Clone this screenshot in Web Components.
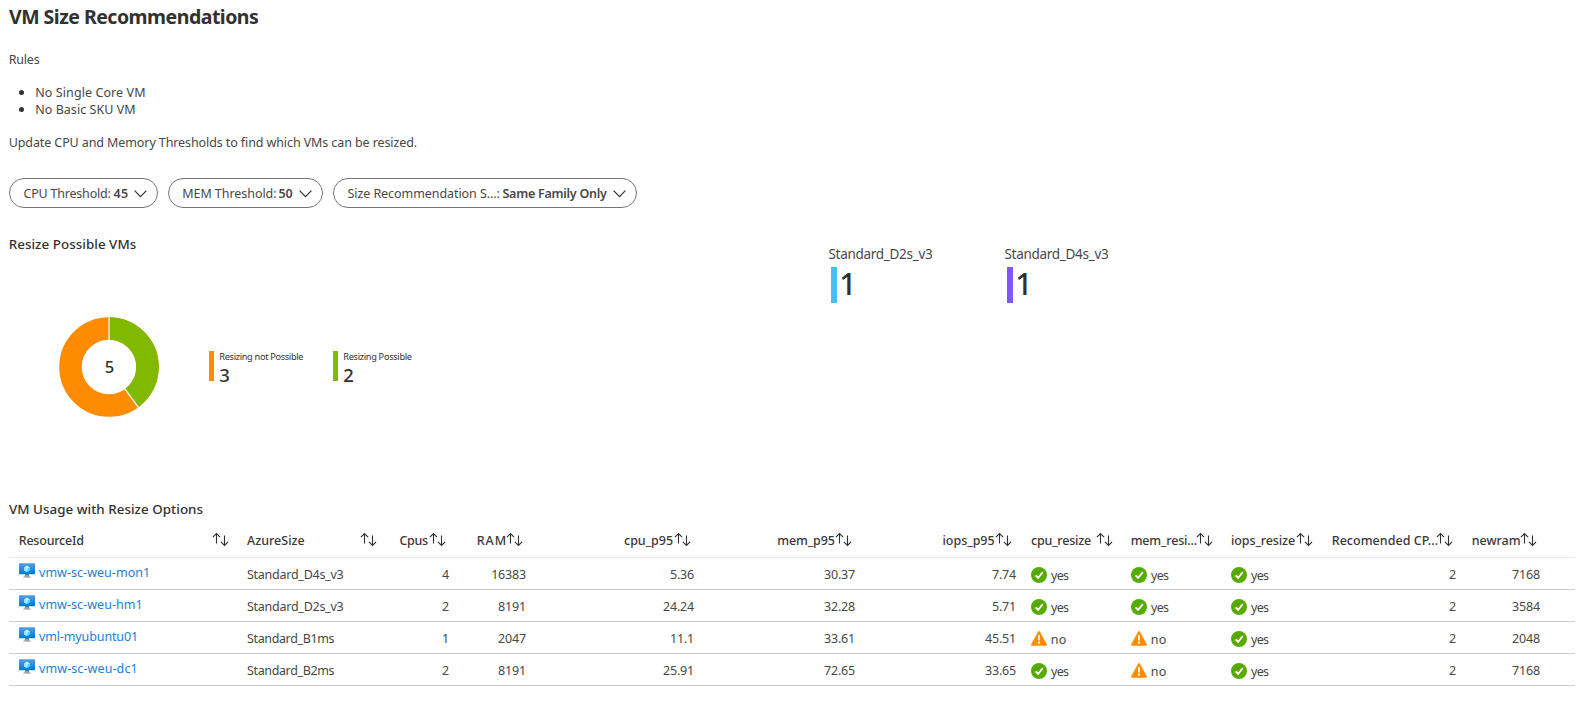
<!DOCTYPE html>
<html lang="en">
<head>
<meta charset="utf-8">
<title>VM Size Recommendations</title>
<style>
body{margin:0;background:#fff;color:#484746;font-family:"Noto Sans","Open Sans",sans-serif;font-size:12.5px;overflow:hidden}
</style>
</head>
<body>
<vm-workbook></vm-workbook>
<script>
const define=(name,css,html,ready)=>{
  const t=document.createElement('template');
  t.innerHTML=`<style>${css}</style>${html}`;
  customElements.define(name,class extends HTMLElement{
    connectedCallback(){
      if(this.shadowRoot)return;
      this.attachShadow({mode:'open'}).append(t.content.cloneNode(true));
      if(ready)ready.call(this,this.shadowRoot);
    }
  });
};

/* A single line of text tracked so that its ink spans the width in "w". */
const pen=document.createElement('canvas').getContext('2d');
define('fit-text',`:host{display:inline-block;flex:none;white-space:pre}`,`<slot></slot>`,function(){
  const w=+this.getAttribute('w'),cs=getComputedStyle(this),s=this.textContent;
  pen.font=`${cs.fontWeight} ${cs.fontSize} ${cs.fontFamily}`;
  const m=pen.measureText(s);
  const ink=m.actualBoundingBoxLeft+m.actualBoundingBoxRight;
  const lead=m.actualBoundingBoxLeft;
  this.style.width=w+'px';
  this.style.textIndent=(lead<-.8?lead+.7:lead)+'px';
  if(s.length>1)this.style.letterSpacing=((w-ink)/(s.length-1)).toFixed(3)+'px';
});

define('sort-icon',`:host{display:block;flex:none;width:17px;height:17px}svg{display:block}`,
`<svg width="17" height="17" viewBox="0 0 17 17" fill="none" stroke="#323130" stroke-width="1.1"><path d="M4.500 11.500V1.700M.9 5.100l3.600-3.600 3.600 3.600M12.500 3.500v9.800M8.900 9.800l3.600 3.600 3.600-3.600"/></svg>`);

define('vm-icon',`:host{display:block;flex:none;width:16px;height:15px}svg{display:block}`,
`<svg width="16" height="15" viewBox="0 0 16 15"><defs><linearGradient id="g" x1="0" y1="1" x2="0" y2="0"><stop offset="0" stop-color="#0078d4"/><stop offset="1" stop-color="#5a9bef"/></linearGradient><linearGradient id="s" x1="0" y1="0" x2="0" y2="1"><stop offset="0" stop-color="#777"/><stop offset="1" stop-color="#bbb"/></linearGradient></defs>
<path d="M6 11h4c0 2 .6 2.700 2 3v.7H4V14c1.400-.3 2-1 2-3z" fill="url(#s)"/><rect y=".2" width="16" height="11" rx=".5" fill="url(#g)"/>
<path d="M8 2.700l2.800 1.500v3.200L8 9 5.200 7.400V4.200z" fill="#50e6ff"/><path d="M8 2.700l2.800 1.500L8 5.800 5.200 4.200z" fill="#c3f1ff"/><path d="M8 5.800V9L5.200 7.400V4.200z" fill="#9cebff"/></svg>`);

define('status-icon',`:host{display:block;flex:none;width:16px;height:16px}svg{display:none}:host([kind=yes]) .y,:host([kind=no]) .n{display:block}`,
`<svg class="y" width="16" height="16" viewBox="0 0 16 16"><circle cx="8" cy="8" r="8" fill="#57ab00"/><path d="M4.600 8.300l2.500 2.500L11.800 5.200" fill="none" stroke="#fff" stroke-width="1.900"/></svg>
<svg class="n" width="16" height="16" viewBox="0 0 16 16"><path d="M7.200.6Q8-.5 8.800.6l7 12.700q.6 1.200-.7 1.400H.9q-1.300-.2-.7-1.400z" fill="#ff8c00"/><path d="M7 4.300h2l-.3 5.200H7.300z" fill="#fff"/><circle cx="8" cy="11.700" r="1.150" fill="#fff"/></svg>`);

define('filter-pill',`:host{display:flex;box-sizing:border-box;height:30px;border:1px solid #777;border-radius:15px;line-height:29px;padding-left:13.500px}
slot[name=value]{display:block;margin-left:3px;font-weight:600}svg{display:block;margin:11px 0 0 6px}`,
`<slot></slot><slot name="value"></slot><svg width="13" height="8" viewBox="0 0 13 8" fill="none" stroke="#323130" stroke-width="1.200"><path d="M.6.700l5.900 5.900L12.400.7"/></svg>`);

define('usage-donut',`:host{display:block;width:100px;height:100px}svg{display:block}text{font:500 16.500px "Noto Sans",sans-serif;fill:#323130}`,
`<svg width="100" height="100" viewBox="0 0 100 100"><g fill="none" stroke-width="22.500" transform="rotate(-90 50 50)"><circle cx="50" cy="50" r="38.500" stroke="#ff8c00"/><circle cx="50" cy="50" r="38.500" stroke="#7fba00" pathLength="100" stroke-dasharray="40 60"/></g><path d="M50 0v23M65.900 71.800L79.600 90.700" stroke="#fff" stroke-width="1.200"/><text x="50.500" y="56" text-anchor="middle">5</text></svg>`);

define('legend-item',`:host{display:flex;gap:5.300px;color:#323130}i{width:5px;height:30px;background:var(--tone)}div{display:flex;flex-direction:column}
slot{display:block;font-size:9.200px;line-height:12px;height:12px}slot[name=value]{font-size:18.500px;font-weight:500;line-height:20px;height:20px;margin-top:2px}`,
`<i></i><div><slot></slot><slot name="value"></slot></div>`);

define('count-tile',`:host{display:block;width:176px}slot{display:block;font-size:13.500px;line-height:18px;height:18px}
div{display:flex;gap:4px;margin:4px 0 0 2px}i{width:6px;height:36px;background:var(--tone)}slot[name=value]{font-size:30px;font-weight:500;line-height:33px;height:33px;color:#323130}`,
`<slot></slot><div><i></i><slot name="value"></slot></div>`);

/* name, name width, numeric column */
const columns=[['ResourceId',63.5],['AzureSize',57.5],['Cpus',28.5,1],['RAM',28,1],['cpu_p95',49,1],['mem_p95',56.5,1],['iops_p95',52,1],['cpu_resize',60],['mem_resi...',65],['iops_resize',64],['Recomended CP...',105,1],['newram',47,1]];
const machines=[
 [['vmw-sc-weu-mon1',109],['Standard_D4s_v3',96.5],'4','16383','5.36','30.37','7.74','yes','yes','yes','2','7168'],
 [['vmw-sc-weu-hm1',101.5],['Standard_D2s_v3',96.5],'2','8191','24.24','32.28','5.71','yes','yes','yes','2','3584'],
 [['vml-myubuntu01',97],['Standard_B1ms',87.5],'1','2047','11.1','33.61','45.51','no','no','yes','2','2048'],
 [['vmw-sc-weu-dc1',96.5],['Standard_B2ms',87.5],'2','8191','25.91','72.65','33.65','yes','no','yes','2','7168']];
define('vm-grid',`:host{display:block;width:1566px}
.r{display:grid;grid-template-columns:228px 148px 74px 77px 168px 161px 156px 100px 100px 100px 145px 84px;border-bottom:1px solid #ccc;height:31px;line-height:17px}
.r.h{height:39px;border-color:#eaeaea;font-weight:500;color:#3a3938}
.c{display:flex;padding:8px 0 0 10px;min-width:0}
.n{justify-content:flex-end;padding-right:10px;letter-spacing:-.18px}.n:nth-child(7){padding-right:5px}
.h .c{padding:14px 8.500px 0 10px;justify-content:space-between;letter-spacing:0}
.h .n{justify-content:flex-end;padding:14px 13.500px 0 0;gap:.5px}.h .n:nth-child(7){padding-right:9px}
.h .n:nth-child(11){gap:0}.h .n:nth-child(11) fit-text{margin-right:-1.500px}
.c.l{color:#1a80d9;gap:4px;padding-top:6px}.l vm-icon{margin-top:-1px}
.s{gap:4px;padding-top:9px}`,``,function(root){
  const row=(cls,cells)=>`<div class="r ${cls}">${cells}</div>`;
  const num=i=>columns[i][2]?'n':'';
  const cell=(v,i)=>{
    if(i===0)return `<div class="c l"><vm-icon></vm-icon><fit-text w="${v[1]}">${v[0]}</fit-text></div>`;
    if(i===1)return `<div class="c"><fit-text w="${v[1]}">${v[0]}</fit-text></div>`;
    if(v==='yes'||v==='no')return `<div class="c s"><status-icon kind="${v}"></status-icon><fit-text w="${v==='yes'?18:14}">${v}</fit-text></div>`;
    return `<div class="c ${num(i)}">${v}</div>`;
  };
  const box=document.createElement('div');
  box.innerHTML=row('h',columns.map((c,i)=>`<div class="c ${num(i)}"><fit-text w="${c[1]}">${c[0]}</fit-text><sort-icon></sort-icon></div>`).join(''))
   +machines.map(m=>row('',m.map(cell).join(''))).join('');
  root.append(box);
});

define('vm-workbook',`:host{display:block;box-sizing:border-box;height:706px;padding-left:9px;line-height:17px}
h1,h2,p,ul{margin:0;color:#484746}h1,h2{color:#323130}h1{font-size:19.500px;line-height:34px;height:32px;font-weight:700}
p,li{height:17px}p fit-text,li fit-text{display:block}.rules{margin-top:19px}
ul{padding:0;margin:16px 0;list-style:none}li{display:flex;align-items:center;gap:11.500px;padding-left:10px}li::before{content:"";width:5px;height:5px;border-radius:50%;background:#323130}
.f{display:flex;gap:10px;margin-top:27px}
h2{font-size:13.400px;line-height:18px;height:18px;font-weight:500}
.m{display:grid;grid-template-columns:819.500px 1fr;height:265px;margin-top:27px}
.d{display:flex;padding:64px 0 0 50px}.k{display:flex;margin:34px 0 0 50px}
.t{display:flex;padding-top:10px}`,
`<h1><fit-text w="249">VM Size Recommendations</fit-text></h1>
<p class="rules"><fit-text w="30">Rules</fit-text></p>
<ul><li><fit-text w="109">No Single Core VM</fit-text></li><li><fit-text w="99">No Basic SKU VM</fit-text></li></ul>
<p><fit-text w="407">Update CPU and Memory Thresholds to find which VMs can be resized.</fit-text></p>
<div class="f">
<filter-pill style="width:149px"><fit-text w="87">CPU Threshold:</fit-text><fit-text slot="value" w="14.500">45</fit-text></filter-pill>
<filter-pill style="width:155px"><fit-text w="93">MEM Threshold:</fit-text><fit-text slot="value" w="14">50</fit-text></filter-pill>
<filter-pill style="width:304px"><fit-text w="152">Size Recommendation S...:</fit-text><fit-text slot="value" w="104.500">Same Family Only</fit-text></filter-pill>
</div>
<div class="m"><section><h2><fit-text w="126">Resize Possible VMs</fit-text></h2>
<div class="d"><usage-donut></usage-donut><div class="k">
<legend-item style="--tone:#ff8c00;width:124px"><fit-text w="84">Resizing not Possible</fit-text><fit-text slot="value" w="9.500">3</fit-text></legend-item>
<legend-item style="--tone:#7fba00"><fit-text w="68.500">Resizing Possible</fit-text><fit-text slot="value" w="9.500">2</fit-text></legend-item></div></div></section>
<section class="t"><count-tile style="--tone:#47bdf5"><fit-text w="103.500">Standard_D2s_v3</fit-text><fit-text slot="value" w="10">1</fit-text></count-tile>
<count-tile style="--tone:#7e58ff"><fit-text w="103.500">Standard_D4s_v3</fit-text><fit-text slot="value" w="10">1</fit-text></count-tile></section></div>
<h2><fit-text w="193.500">VM Usage with Resize Options</fit-text></h2>
<vm-grid></vm-grid>`);
</script>
</body>
</html>
